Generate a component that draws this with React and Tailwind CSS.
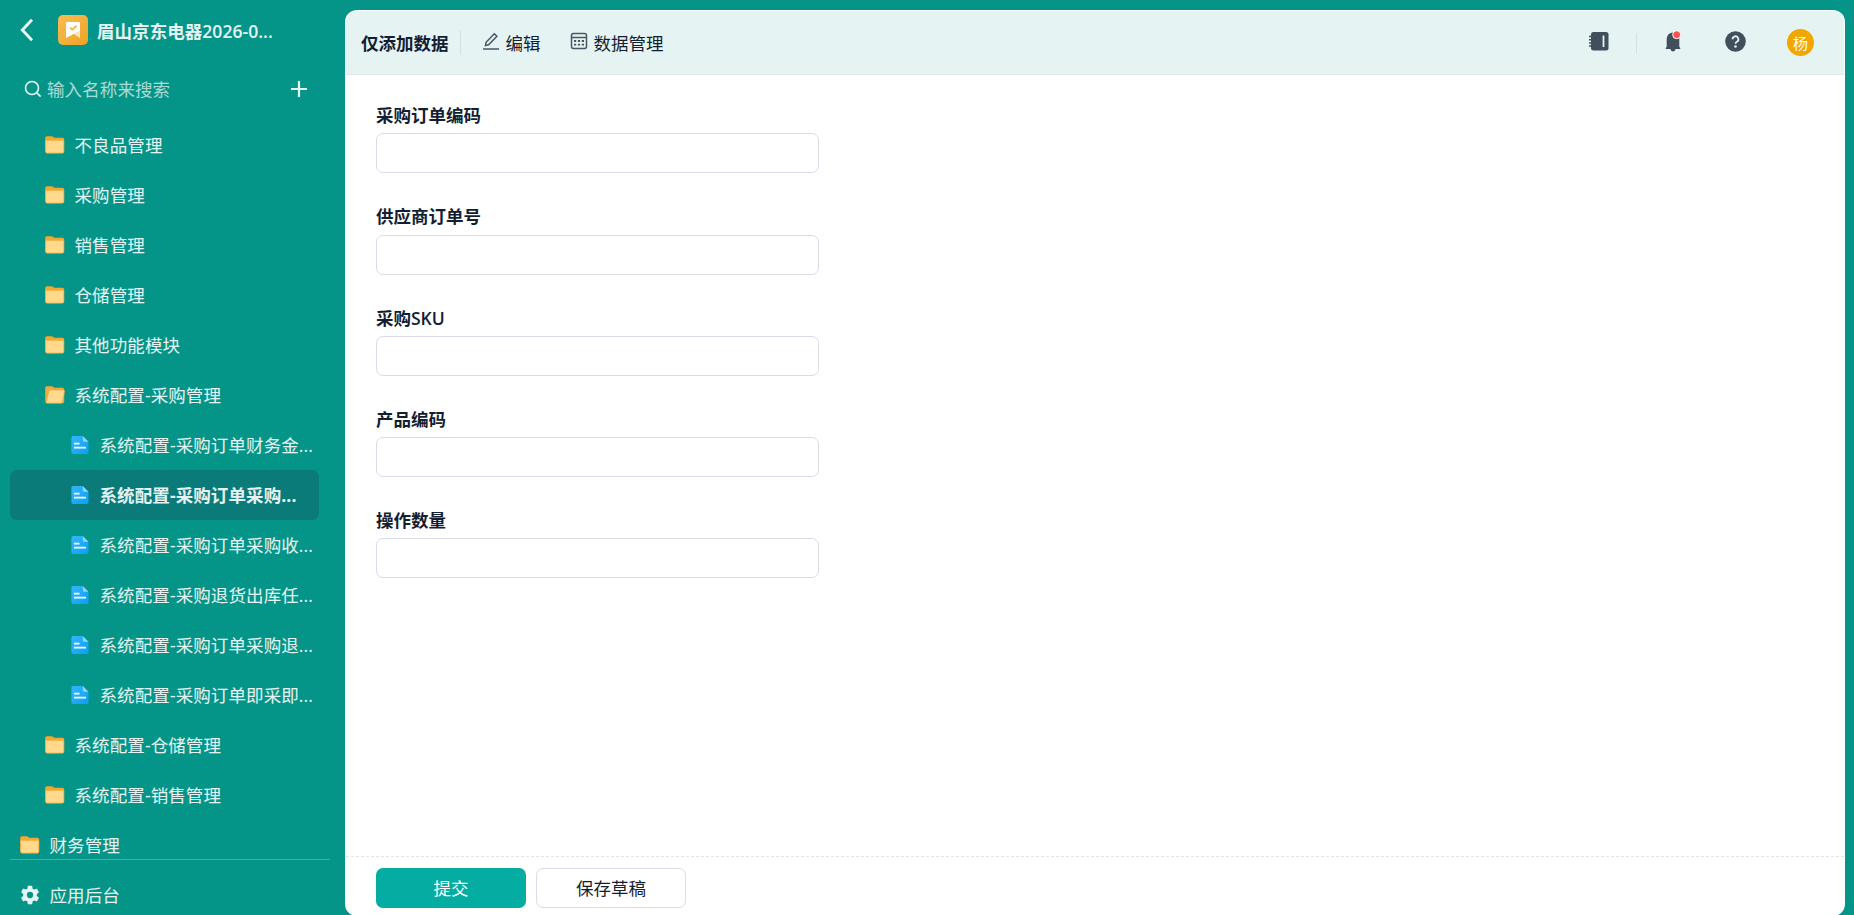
import React, { useState } from 'react';

const folders = [
    { name: '不良品管理' },
    { name: '采购管理' },
    { name: '销售管理' },
    { name: '仓储管理' },
    { name: '其他功能模块' },
    {
        name: '系统配置-采购管理',
        open: true,
        items: [
            '系统配置-采购订单财务金...',
            '系统配置-采购订单采购...',
            '系统配置-采购订单采购收...',
            '系统配置-采购退货出库任...',
            '系统配置-采购订单采购退...',
            '系统配置-采购订单即采即...'
        ]
    },
    { name: '系统配置-仓储管理' },
    { name: '系统配置-销售管理' }
];

const fields = ['采购订单编码', '供应商订单号', '采购SKU', '产品编码', '操作数量'];

const FolderIcon = ({ open }) => (
    <svg className="h-5 w-5 shrink-0" viewBox="0 0 20 20">
        <path d="M0.2 3a1.800 1.800 0 0 1 1.800-1.800h4.500c.6 0 1 .2 1.400.5l1.400 1h8a1.900 1.900 0 0 1 1.900 1.900v12a1.800 1.800 0 0 1-1.800 1.800H2a1.800 1.800 0 0 1-1.800-1.800z" fill={open ? '#f2ab3a' : '#f3a832'} />
        {open ? (
            <path d="M5.400 5h12.800a1.300 1.300 0 0 1 1.300 1.600l-2.100 10.200a1.600 1.600 0 0 1-1.600 1.300H1.900c-.6 0-.9-.5-.7-1.100L3.900 6c.2-.6.8-1 1.500-1z" fill="#ffd98c" stroke="#e9a83a" strokeWidth="0.7" />
        ) : (
            <path d="M0.700 5.600h18v10.800a1.500 1.500 0 0 1-1.500 1.500h-15a1.500 1.500 0 0 1-1.500-1.500z" fill="#ffda8c" stroke="#f0b047" strokeWidth="0.6" />
        )}
    </svg>
);

const DocIcon = () => (
    <svg className="h-5 w-5 shrink-0" viewBox="0 0 20 20">
        <defs>
            <linearGradient id="doc" x1="0" y1="0" x2="1" y2="1">
                <stop offset="0" stopColor="#36b6fa" />
                <stop offset="1" stopColor="#0a9ff4" />
            </linearGradient>
        </defs>
        <path d="M3.200 1h9.300l6 6v10.200a1.800 1.800 0 0 1-1.800 1.800H3.200a1.800 1.800 0 0 1-1.800-1.800V2.800A1.800 1.800 0 0 1 3.200 1z" fill="url(#doc)" />
        <path d="M12.800 1l5.700 5.800h-4.200a1.500 1.500 0 0 1-1.500-1.500z" fill="#8bd6fb" />
        <path d="M4 8.600h5.500M4 12.600h12" stroke="#fff" strokeWidth="1.700" />
    </svg>
);

const Sidebar = ({ active, onSelect }) => (
    <aside className="flex h-full w-[345px] shrink-0 flex-col text-[17.5px] text-white/90">
        <div className="flex h-[60px] shrink-0 items-center pl-5">
            <svg className="h-6 w-4" viewBox="0 0 16 24" fill="none" stroke="#e6f4f3" strokeWidth="2.900">
                <path d="M12 1.800L2.300 12l9.700 10.200" />
            </svg>
            <svg className="ml-[22px] h-[30px] w-[30px]" viewBox="0 0 30 30">
                <defs>
                    <linearGradient id="app" x1="0" y1="0" x2="1" y2="1">
                        <stop offset="0" stopColor="#f8bd55" />
                        <stop offset="1" stopColor="#eda324" />
                    </linearGradient>
                </defs>
                <rect width="30" height="30" rx="5" fill="url(#app)" />
                <path d="M8 8.500a1.500 1.500 0 0 1 1.500-1.500h11A1.500 1.500 0 0 1 22 8.500V23l-7-4.500L8 23z" fill="#fbe3b6" />
                <path d="M8 8.500a1.500 1.500 0 0 1 1.500-1.500h11A1.500 1.500 0 0 1 22 8.500V15.500L8 23z" fill="#fff" />
                <path d="M12 12.500l2.300 2.300 4.200-4.200" fill="none" stroke="#f0aa35" strokeWidth="1.500" />
            </svg>
            <div className="ml-[9px] pt-0.5 font-semibold tracking-[0.05px]">眉山京东电器2026-0...</div>
        </div>
        <div className="flex h-[60px] shrink-0 items-center pb-0.5 pl-6 pr-[37px]">
            <svg className="h-[18px] w-[18px]" viewBox="0 0 18 18" fill="none" stroke="#e6f4f3" strokeWidth="1.600">
                <circle cx="8" cy="8" r="6.500" />
                <path d="M12.600 12.600l4 4" />
            </svg>
            <input placeholder="输入名称来搜索" className="ml-[5px] w-56 bg-transparent tracking-[0.1px] outline-none placeholder:text-white/65" />
            <svg className="ml-auto h-[18px] w-[18px]" viewBox="0 0 18 18" stroke="#e6f4f3" strokeWidth="2.200">
                <path d="M1 9h16M9 1v16" />
            </svg>
        </div>
        <nav className="h-[739px] shrink-0 overflow-hidden pl-2.5 pr-[26px] tracking-[0.1px]">
            {folders.map((folder) => (
                <div key={folder.name}>
                    <div className="flex h-[50px] items-center gap-[9.5px] pl-[35px]">
                        <FolderIcon open={folder.open} />
                        <span>{folder.name}</span>
                    </div>
                    {folder.items?.map((item) => (
                        <button
                            key={item}
                            onClick={() => onSelect(item)}
                            className={`flex h-[50px] w-full items-center gap-[9.5px] rounded-[7px] pl-[60px] whitespace-nowrap ${item === active ? 'bg-[#0a7b78] font-bold' : ''}`}
                        >
                            <DocIcon />
                            <span>{item}</span>
                        </button>
                    ))}
                </div>
            ))}
            <div className="flex h-[50px] items-center gap-[9.5px] pl-2.5">
                <FolderIcon />
                <span>财务管理</span>
            </div>
        </nav>
        <div className="ml-2.5 mr-[15px] flex h-[70px] shrink-0 items-center gap-[9.5px] border-t border-white/25 pl-2.5 tracking-[0.1px]">
            <svg className="h-5 w-5" viewBox="1.500 1.500 21 21" fill="#e6f4f3">
                <path d="M19.140 12.940c.04-.3.060-.610.060-.940s-.02-.640-.070-.940l2.030-1.580a.49.49 0 0 0 .120-.610l-1.920-3.320a.49.49 0 0 0-.590-.220l-2.390.960a7 7 0 0 0-1.620-.940l-.360-2.540a.48.48 0 0 0-.480-.410h-3.840a.48.48 0 0 0-.470.410l-.360 2.540c-.590.240-1.130.570-1.620.940l-2.390-.960a.48.48 0 0 0-.590.220L2.740 8.870a.48.48 0 0 0 .120.610l2.030 1.580c-.05.3-.09.630-.09.940s.02.640.070.940l-2.030 1.580a.49.49 0 0 0-.120.610l1.920 3.320c.120.220.370.290.590.220l2.390-.960c.5.380 1.030.7 1.620.940l.360 2.540c.05.240.240.410.480.410h3.840c.240 0 .440-.170.470-.410l.360-2.540a7 7 0 0 0 1.620-.940l2.390.960c.220.080.470 0 .590-.220l1.920-3.320a.48.48 0 0 0-.120-.610zM12 15.300a3.300 3.300 0 1 1 0-6.600 3.300 3.300 0 0 1 0 6.600z" />
            </svg>
            <span>应用后台</span>
        </div>
    </aside>
);

const Header = () => (
    <header className="flex h-16 shrink-0 items-center border-b border-[#dfe5e8] bg-[#e5f3f3] pl-[15px] pr-[30px]">
        <h1 className="font-bold">仅添加数据</h1>
        <span className="ml-[11px] h-[25px] w-px bg-[#d3dfe0]" />
        <button className="ml-[21px] flex items-center gap-1.5">
            <svg className="mb-1 h-[18px] w-[18px]" viewBox="0 0 18 18" fill="none" stroke="#4b5563" strokeWidth="1.500">
                <path d="M1 17h16M3.500 13.500l.6-3.200 8.200-8.500 2.600 2.500-8.300 8.500z" />
            </svg>
            <span>编辑</span>
        </button>
        <button className="ml-[29px] flex items-center gap-1.5">
            <svg className="mb-[3px] h-[18px] w-[18px]" viewBox="0 0 18 18" fill="none" stroke="#4b5563" strokeWidth="1.500">
                <rect x="1.500" y="1.500" width="15" height="15" rx="2" />
                <path d="M1.500 5.500h15" />
                <path d="M4 9h2.200M7.900 9h2.200M11.800 9H14M4 12.600h2.200M7.900 12.600h2.200M11.800 12.600H14" strokeWidth="1.900" />
            </svg>
            <span>数据管理</span>
        </button>
        <div className="ml-auto flex items-center">
            <svg className="mb-[3px] h-5 w-5" viewBox="0 0 20 20">
                <rect x="2" y="1" width="17.500" height="18.500" rx="2.500" fill="#414e5c" />
                <path d="M0 5.500h4M0 8.700h4M0 11.900h4M0 15.100h4" stroke="#414e5c" strokeWidth="1.500" />
                <path d="M14.500 4.500v11.500" stroke="#e5f3f3" strokeWidth="1.800" />
            </svg>
            <span className="ml-[27px] h-5 w-px bg-[#d3dfe0]" />
            <svg className="mb-[3px] ml-[27px] h-[22px] w-[18px]" viewBox="0 0 18 22">
                <path d="M9 2.500a6.300 6.300 0 0 1 6.300 6.300V16.500l1.200 2.500h-15l1.200-2.500V8.800A6.300 6.300 0 0 1 9 2.500zM6.500 19h5a2.500 2.500 0 0 1-5 0z" fill="#414e5c" />
                <circle cx="12.700" cy="4.700" r="4" fill="#f45454" stroke="#fff" />
            </svg>
            <svg className="mb-0.5 ml-[43px] h-[21px] w-[21px]" viewBox="0 0 21 21">
                <circle cx="10.500" cy="10.500" r="10.300" fill="#414e5c" />
                <path d="M7.600 8.200a2.900 2.900 0 1 1 4.300 2.500c-.9.500-1.400 1-1.400 2" fill="none" stroke="#e5f3f3" strokeWidth="1.800" />
                <circle cx="10.500" cy="15.500" r="1.300" fill="#e5f3f3" />
            </svg>
            <span className="ml-[41px] flex h-[27px] w-[27px] items-center justify-center rounded-full bg-[#f2a600] text-[15px] text-white">杨</span>
        </div>
    </header>
);

const App = () => {
    const [active, setActive] = useState('系统配置-采购订单采购...');

    return (
        <div className="flex h-screen overflow-hidden bg-[#059488] font-['Open_Sans','Noto_Sans_CJK_SC',sans-serif] text-[17.5px] leading-[26px] text-[#141e31]">
            <Sidebar active={active} onSelect={setActive} />
            <main className="-mb-px mr-[9px] mt-2.5 flex min-w-0 flex-1 flex-col overflow-hidden rounded-xl border border-white/80 bg-white">
                <Header />
                <section className="flex-1 px-[30px] pt-[27px]">
                    {fields.map((field) => (
                        <label key={field} className="mb-[30px] block w-[443px]">
                            <span className="block h-[31.3px] font-semibold">{field}</span>
                            <input className="block h-10 w-full rounded-[7px] border border-[#d9dce6] px-3 outline-none" />
                        </label>
                    ))}
                </section>
                <footer className="flex h-[59px] shrink-0 gap-2.5 border-t border-dashed border-[#e1e4ec] px-[30px] pt-[11px]">
                    <button className="h-10 w-[150px] rounded-[7px] bg-[#05aca2] text-white">提交</button>
                    <button className="h-10 w-[150px] rounded-[7px] border border-[#d9dce6]">保存草稿</button>
                </footer>
            </main>
        </div>
    );
};

export default App;
